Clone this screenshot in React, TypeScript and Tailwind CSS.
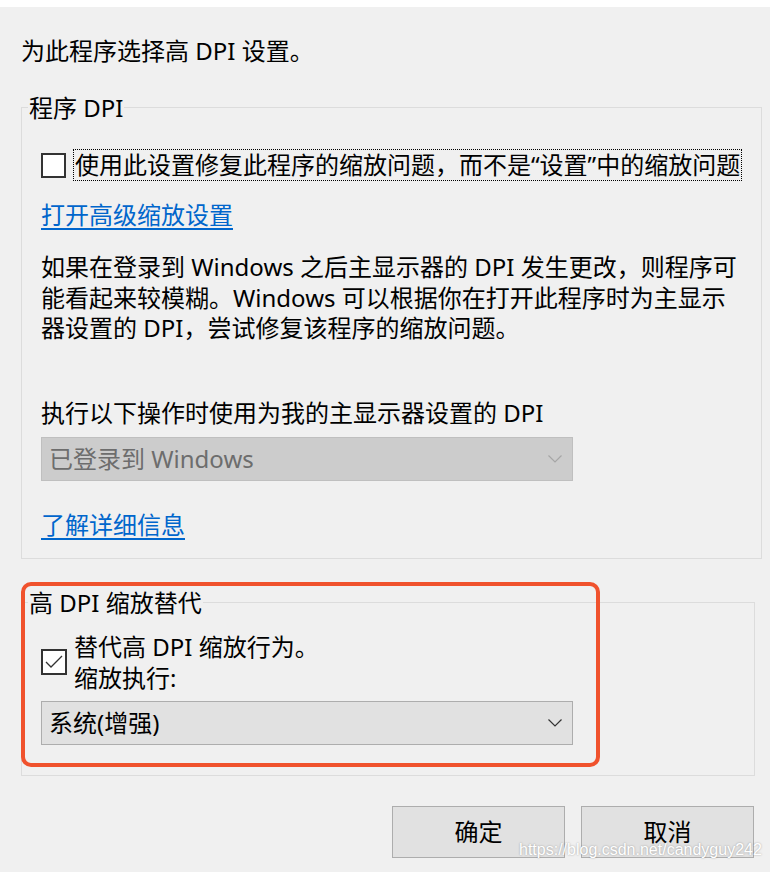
import React from 'react';

const font = { fontFamily: '"Noto Sans", "Noto Sans CJK SC", sans-serif' };

const Chevron: React.FC<{ color: string }> = ({ color }) => (
    <svg width="14" height="8" viewBox="0 0 14 8" fill="none">
        <path d="M0.5 0.5 L7 7 L13.5 0.5" stroke={color} strokeWidth="1.2" />
    </svg>
);

const App: React.FC = () => {
    return (
        <div className="relative w-[770px] h-[872px] bg-[#f0f0f0] text-[24px] text-black overflow-hidden" style={font}>
            <div className="h-[7px] bg-white"></div>

            <p className="mt-[28px] ml-[21px] leading-[31px]">为此程序选择高 DPI 设置。</p>

            {/* 程序 DPI */}
            <fieldset className="mt-[26px] ml-[21px] w-[734px] border border-[#dcdcdc] px-[19px] pb-[18px]">
                <legend className="-ml-[13px] px-[1px] leading-[31px]">程序 DPI</legend>

                <div className="mt-[26px] flex items-center">
                    <span className="w-[25px] h-[25px] border-2 border-[#333] bg-white shrink-0"></span>
                    <span className="ml-[7px] border border-dotted border-black leading-[30px] px-[1px] whitespace-nowrap">
                        使用此设置修复此程序的缩放问题，而不是“设置”中的缩放问题
                    </span>
                </div>

                <a className="mt-[18px] block w-fit leading-[31px] text-[#0066cc] underline underline-offset-[4px]">打开高级缩放设置</a>

                <p className="mt-[22px] leading-[30.5px] whitespace-nowrap">
                    如果在登录到 Windows 之后主显示器的 DPI 发生更改，则程序可<br />
                    能看起来较模糊。Windows 可以根据你在打开此程序时为主显示<br />
                    器设置的 DPI，尝试修复该程序的缩放问题。
                </p>

                <p className="mt-[53px] leading-[31px]">执行以下操作时使用为我的主显示器设置的 DPI</p>

                <div className="mt-[9px] w-[532px] h-[44px] flex items-center justify-between border border-[#bfbfbf] bg-[#cccccc] pl-[7px] pr-[10px]">
                    <span className="text-[#6d6d6d]">已登录到 Windows</span>
                    <Chevron color="#a6a6a6" />
                </div>

                <a className="mt-[28px] block w-fit leading-[31px] text-[#0066cc] underline underline-offset-[4px]">了解详细信息</a>
            </fieldset>

            {/* 高 DPI 缩放替代 */}
            <fieldset className="relative mt-[28px] ml-[21px] w-[734px] border border-[#dcdcdc] px-[19px] pb-[30px]">
                <legend className="-ml-[13px] px-[1px] leading-[31px]">高 DPI 缩放替代</legend>

                <div className="mt-[13px] flex items-center">
                    <span className="w-[26px] h-[26px] border-2 border-[#333] bg-white shrink-0 flex items-center justify-center">
                        <svg width="18" height="14" viewBox="0 0 18 14" fill="none">
                            <path d="M1 7 L6 12 L17 1" stroke="#333" strokeWidth="1.3" />
                        </svg>
                    </span>
                    <div className="ml-[7px] leading-[31px]">
                        <p>替代高 DPI 缩放行为。</p>
                        <p>缩放执行:</p>
                    </div>
                </div>

                <div className="mt-[8px] w-[532px] h-[44px] flex items-center justify-between border border-[#adadad] bg-[#e1e1e1] pl-[7px] pr-[10px]">
                    <span>系统(增强)</span>
                    <Chevron color="#333" />
                </div>
            </fieldset>

            <div className="mt-[30px] flex justify-end gap-[16px] pr-[16px]">
                <button className="w-[173px] h-[52px] border border-[#adadad] bg-[#e1e1e1]">确定</button>
                <button className="w-[173px] h-[52px] border border-[#adadad] bg-[#e1e1e1]">取消</button>
            </div>

            {/* annotation */}
            <div className="absolute left-[21px] top-[582px] w-[579px] h-[185px] border-4 border-[#f0522d] rounded-[10px] pointer-events-none"></div>

            <div
                className="absolute left-[519px] top-[840px] text-[16px] leading-[20px] text-white [text-shadow:0_0_2px_rgba(0,0,0,0.35)] whitespace-nowrap"
                style={{ fontFamily: '"Liberation Sans", sans-serif' }}
            >
                https://blog.csdn.net/candyguy242
            </div>
        </div>
    );
};

export default App;
